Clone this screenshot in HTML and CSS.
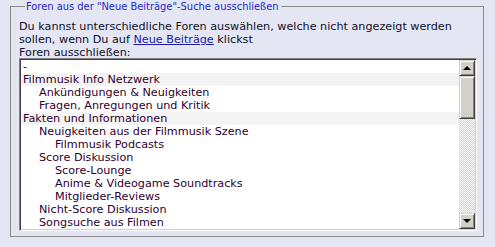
FILE: index.html
```html
<!DOCTYPE html>
<html lang="de">
<head>
    <meta charset="UTF-8">
    <title>Foren ausschließen</title>
    <link rel="stylesheet" href="styles.css">
</head>
<body>
    <fieldset class="box">
        <legend>Foren aus der "Neue Beiträge"-Suche ausschließen</legend>
        <p class="intro">Du kannst unterschiedliche Foren auswählen, welche nicht angezeigt werden<br>sollen, wenn Du auf <a href="#">Neue Beiträge</a> klickst</p>
        <div class="label">Foren ausschließen:</div>

        <div class="listbox">
            <ul class="options">
                <li>-</li>
                <li class="cat">Filmmusik Info Netzwerk</li>
                <li class="lvl2">Ankündigungen &amp; Neuigkeiten</li>
                <li class="lvl2">Fragen, Anregungen und Kritik</li>
                <li class="cat">Fakten und Informationen</li>
                <li class="lvl2">Neuigkeiten aus der Filmmusik Szene</li>
                <li class="lvl3">Filmmusik Podcasts</li>
                <li class="lvl2">Score Diskussion</li>
                <li class="lvl3">Score-Lounge</li>
                <li class="lvl3">Anime &amp; Videogame Soundtracks</li>
                <li class="lvl3">Mitglieder-Reviews</li>
                <li class="lvl2">Nicht-Score Diskussion</li>
                <li class="lvl2">Songsuche aus Filmen</li>
            </ul>
            <div class="scrollbar">
                <div class="sb-btn"><span class="arrow up"></span></div>
                <div class="sb-thumb"></div>
                <div class="sb-track"></div>
                <div class="sb-btn"><span class="arrow down"></span></div>
            </div>
        </div>
    </fieldset>
</body>
</html>
```

FILE: styles.css
```css
:root {
    --page-bg: #e4e6f4;
    --face: #d4d0c8;
}
body {
    margin: 0;
    background-color: var(--page-bg);
    font-family: "DejaVu Sans", Verdana, sans-serif;
    font-size: 11.2px;
    color: #10102a;
}

.box {
    margin: 0 11px 0 10px;
    padding: 6px 6px 5px 8px;
    border: 1px solid #8a8a8a;
}
.box legend {
    margin-left: 6px;
    padding: 0 2px 0 1px;
    font-family: "DejaVu Sans Condensed", Tahoma, sans-serif;
    font-size: 11px;
    color: #2828c8;
}

.intro {
    margin: 0;
    padding-top: 1px;
    line-height: 13px;
}
.label {
    height: 12px;
    line-height: 13px;
}
.intro a {
    color: #1c1ca8;
}

.listbox {
    display: flex;
    height: 173px;
    box-sizing: border-box;
    background-color: #fff;
    border-top: 1px solid #808080;
    border-left: 1px solid #808080;
    border-right: 1px solid #fff;
    border-bottom: 1px solid #fff;
    box-shadow: inset 1px 1px 0 #404040, inset -1px -1px 0 var(--face);
    padding: 1px;
    overflow: hidden;
}

.options {
    flex: 1;
    list-style: none;
    margin: 0;
    padding: 0;
    color: #300030;
}
.options li {
    height: 13px;
    line-height: 13px;
    padding-left: 2px;
    white-space: nowrap;
}
.options .cat {
    background-color: #f4f4f4;
}
.options .lvl2 {
    padding-left: 18px;
}
.options .lvl3 {
    padding-left: 34px;
}

.scrollbar {
    width: 16px;
    display: flex;
    flex-direction: column;
}
.sb-btn,
.sb-thumb {
    background-color: var(--face);
    border-top: 1px solid var(--face);
    border-left: 1px solid var(--face);
    border-right: 1px solid #404040;
    border-bottom: 1px solid #404040;
    box-shadow: inset 1px 1px 0 #fff, inset -1px -1px 0 #808080;
    box-sizing: border-box;
}
.sb-btn {
    height: 16px;
    display: flex;
    align-items: center;
    justify-content: center;
}
.sb-thumb {
    height: 43px;
}
.sb-track {
    flex: 1;
    background: repeating-conic-gradient(var(--face) 0 25%, #fff 0 50%) 0 0 / 2px 2px;
}
.arrow {
    width: 0;
    height: 0;
    border-left: 4px solid transparent;
    border-right: 4px solid transparent;
}
.arrow.up {
    border-bottom: 4px solid #000;
    margin-top: -1px;
}
.arrow.down {
    border-top: 4px solid #000;
}
```
